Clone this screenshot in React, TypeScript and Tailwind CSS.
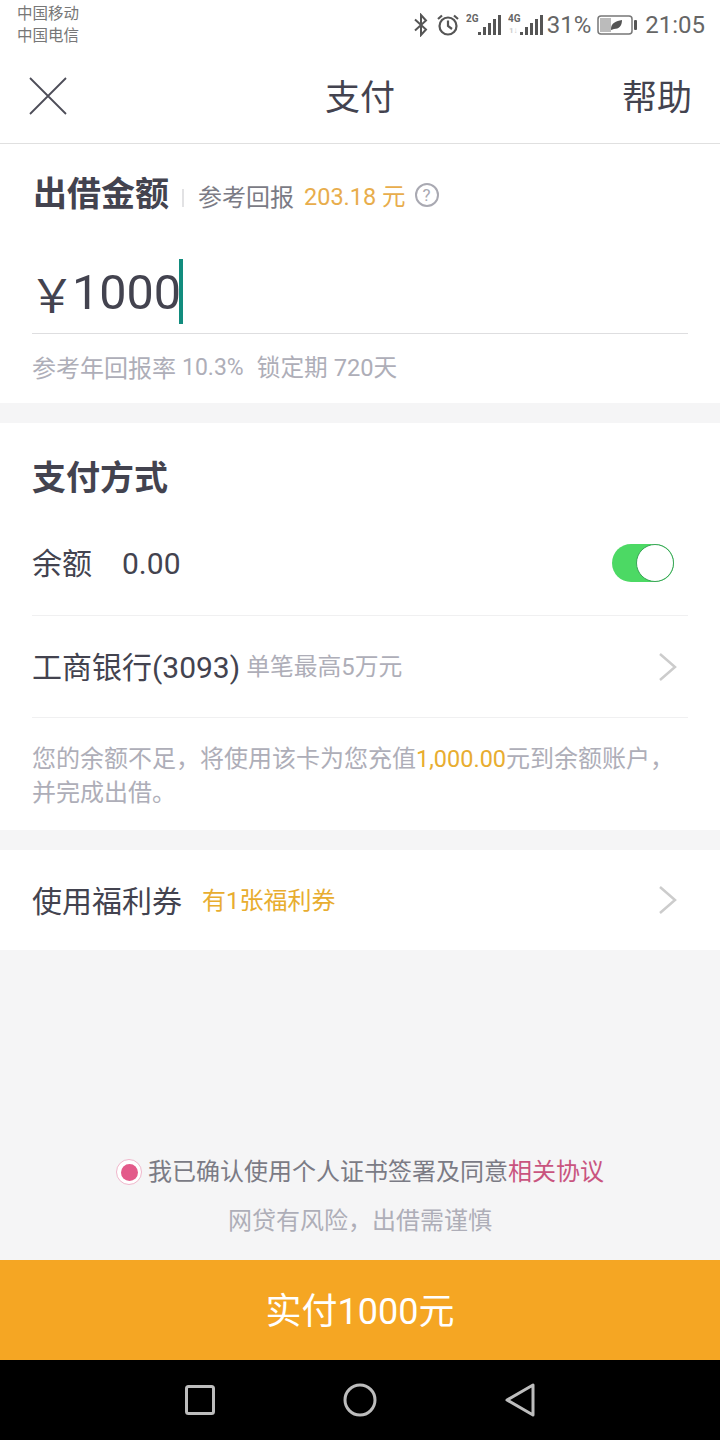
const Signal = ({ label, roaming }: { label: string; roaming?: boolean }) => (
  <svg width="36" height="24" viewBox="0 0 36 24" className="shrink-0">
    <text x="0" y="9" fontSize="10" fontWeight="700" fill="#666" fontFamily="Roboto, sans-serif">{label}</text>
    {roaming && <text x="1" y="20" fontSize="8" fontWeight="700" fill="#ccc" fontFamily="Roboto, sans-serif">1↓</text>}
    <rect x="12" y="19" width="3" height="3" fill="#555" />
    <rect x="17" y="14" width="3" height="8" fill="#555" />
    <rect x="22" y="10" width="3" height="12" fill="#555" />
    <rect x="27" y="6" width="3" height="16" fill="#555" />
    <rect x="32" y="2" width="3" height="20" fill="#555" />
  </svg>
);

const StatusBar = () => (
  <div className="flex h-[48px] items-start justify-between pl-[17px] pr-[15px]">
    <div className="pt-[3px] text-[15.5px] leading-[22px] text-[#777]">
      <div>中国移动</div>
      <div>中国电信</div>
    </div>
    <div className="flex items-center pt-[13px] text-[#666]">
      <svg width="16" height="24" viewBox="0 0 16 24" fill="none" stroke="#555" strokeWidth="2">
        <path d="M2 6.5 13 16.5 8 22V2l5 5.5L2 17.5" />
      </svg>
      <svg width="24" height="24" viewBox="0 0 24 24" fill="none" stroke="#555" strokeWidth="2.2" className="ml-[7px]">
        <circle cx="12" cy="13" r="8.5" />
        <path d="M12 7.5V13l4 3M2 6l4-3.5M22 6l-4-3.5" />
      </svg>
      <div className="ml-[6px] flex gap-[6px]">
        <Signal label="2G" />
        <Signal label="4G" roaming />
      </div>
      <span className="ml-[3px] text-[24px] leading-[24px]">31%</span>
      <svg width="40" height="22" viewBox="0 0 40 22" fill="none" className="ml-[6px]">
        <rect x="1" y="2" width="34" height="18" rx="3" stroke="#777" strokeWidth="1.5" />
        <rect x="3" y="4" width="11" height="14" fill="#bbb" />
        <path d="M14 15c0-6 5-8 11-9 0 6-3 9-8 9l-3 1z" fill="#555" />
        <rect x="37" y="6" width="3" height="10" rx="1" fill="#555" />
      </svg>
      <span className="ml-[8px] text-[24px] leading-[24px]">21:05</span>
    </div>
  </div>
);

const Chevron = () => (
  <svg width="20" height="30" viewBox="0 0 20 30" fill="none" stroke="#ccc" strokeWidth="2.5" className="mr-[10px]">
    <path d="M2 2 17 15 2 28" />
  </svg>
);

export default function App() {
  return (
    <div
      className="flex h-[1440px] w-[720px] flex-col overflow-hidden bg-[#f5f5f6] text-[#43434f]"
      style={{ fontFamily: 'Roboto, "Noto Sans CJK SC", sans-serif' }}
    >
      <div className="bg-white">
        <StatusBar />
        <div className="grid h-[96px] grid-cols-3 items-center border-b border-[#e0e0e0] px-[28px]">
          <svg width="40" height="40" viewBox="0 0 40 40" stroke="#4d4d58" strokeWidth="1.8">
            <path d="M2 2 38 38M38 2 2 38" />
          </svg>
          <span className="pt-[7px] text-center text-[35px] leading-[40px]">支付</span>
          <span className="pt-[7px] text-right text-[35px] leading-[40px]">帮助</span>
        </div>
      </div>

      <section className="h-[259px] bg-white px-[32px]">
        <div className="flex h-[100px] items-center pb-[1px]">
          <span className="ml-[1px] text-[34px] font-bold leading-[40px]">出借金额</span>
          <span className="ml-[13px] mt-[8px] h-[18px] w-[2px] bg-[#e2e2e4]" />
          <span className="ml-[14px] mt-[8px] text-[24px] text-[#7b7b85]">参考回报</span>
          <span className="ml-[10px] mt-[8px] text-[23.5px] text-[#e8ad4c]">203.18 元</span>
          <span className="ml-[9px] mt-[3px] flex h-[24px] w-[24px] items-center justify-center rounded-full border-2 border-[#a9a9b2] text-[17px] leading-none text-[#a9a9b2]">?</span>
        </div>
        <div className="flex h-[90px] items-center border-b border-[#dedee0] pt-[8px]">
          <span className="-ml-[3px] mt-[6px] text-[46px] leading-[56px]">￥</span>
          <span className="-ml-[3px] text-[48.5px] leading-[66px]">1000</span>
          <span className="-ml-[2px] -mt-[3px] h-[65px] w-[4px] bg-[#128c7e]" />
        </div>
        <div className="flex h-[69px] items-center text-[24px] text-[#aeaeb8]">
          <span>参考年回报率</span>
          <span className="ml-[6px] text-[23px]">10.3%</span>
          <span className="ml-[13px] text-[23.7px]">锁定期 720天</span>
        </div>
      </section>

      <section className="mt-[20px] h-[407px] bg-white px-[32px]">
        <div className="flex h-[110px] items-center">
          <span className="text-[34px] font-bold leading-[40px]">支付方式</span>
        </div>
        <div className="flex h-[83px] items-center justify-between border-b border-[#f0f0f1] pb-[22px]">
          <div className="flex items-center text-[30px]">
            <span>余额</span>
            <span className="ml-[30px]">0.00</span>
          </div>
          <div className="mr-[14px] flex h-[38px] w-[62px] items-center justify-end rounded-full bg-[#4cd964]">
            <div className="h-[38px] w-[38px] rounded-full border-[1.5px] border-[#3aa457] bg-white" />
          </div>
        </div>
        <div className="flex h-[102px] items-center justify-between border-b border-[#f0f0f1]">
          <div className="mt-[2px] flex items-center">
            <span className="text-[30px]">工商银行(3093)</span>
            <span className="ml-[6px] text-[23.8px] text-[#aeaeb8]">单笔最高5万元</span>
          </div>
          <Chevron />
        </div>
        <p className="pt-[24px] text-[24px] leading-[34px] text-[#aeaeb8]">
          您的余额不足，将使用该卡为您充值<span className="text-[23.5px] text-[#e8ad30]">1,000.00</span>元到余额账户，并完成出借。
        </p>
      </section>

      <section className="mt-[20px] flex h-[100px] items-center justify-between bg-white px-[32px]">
        <div className="mt-[2px] flex items-center">
          <span className="text-[30px]">使用福利券</span>
          <span className="ml-[20px] text-[24px] text-[#e8ad30]">有1张福利券</span>
        </div>
        <Chevron />
      </section>

      <div className="flex flex-1 flex-col items-center justify-end pb-[22px]">
        <div className="flex items-center text-[24px] leading-[34px] text-[#7b7b85]">
          <span className="mr-[6px] flex h-[26px] w-[26px] items-center justify-center rounded-full border border-[#f0b6cb] bg-white">
            <span className="h-[17px] w-[17px] rounded-full bg-[#e35a8a]" />
          </span>
          我已确认使用个人证书签署及同意<span className="text-[#c9547f]">相关协议</span>
        </div>
        <div className="mt-[15px] text-[24px] leading-[34px] text-[#aeaeb8]">网贷有风险，出借需谨慎</div>
      </div>

      <div className="flex h-[100px] items-center justify-center bg-[#f5a623] pt-[4px] text-[36px] text-white">实付1000元</div>

      <div className="flex h-[80px] items-center gap-[127px] bg-black pl-[184px]">
        <svg width="32" height="32" viewBox="0 0 32 32" fill="none" stroke="#bdbdbd" strokeWidth="3">
          <rect x="2.5" y="2.5" width="27" height="27" rx="2" />
        </svg>
        <svg width="34" height="34" viewBox="0 0 34 34" fill="none" stroke="#bdbdbd" strokeWidth="3">
          <circle cx="17" cy="17" r="15" />
        </svg>
        <svg width="30" height="34" viewBox="0 0 30 34" fill="none" stroke="#bdbdbd" strokeWidth="3" strokeLinejoin="round" className="ml-[1px]">
          <path d="M2 17 28 2V32Z" />
        </svg>
      </div>
    </div>
  );
}
